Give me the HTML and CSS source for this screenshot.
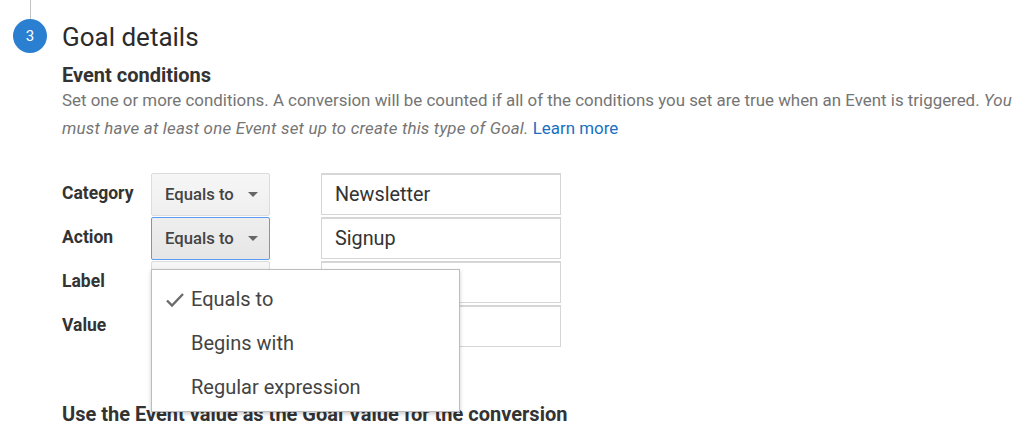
FILE: index.html
```html
<!DOCTYPE html>
<html lang="en">
<head>
    <meta charset="UTF-8">
    <meta name="viewport" content="width=device-width, initial-scale=1.0">
    <title>Goal details</title>
    <link rel="stylesheet" href="styles.css">
</head>
<body>
    <div class="step">
        <div class="rail">
            <div class="rail-line"></div>
            <div class="step-badge">3</div>
        </div>

        <div class="step-content">
            <h2 class="step-title">Goal details</h2>
            <h3 class="section-title">Event conditions</h3>
            <p class="section-desc">
                Set one or more conditions. A conversion will be counted if all of the conditions you set are true when an Event is triggered.
                <em>You must have at least one Event set up to create this type of Goal.</em>
                <a href="#" class="learn-more">Learn more</a>
            </p>

            <div class="conditions">
                <div class="cond-label">Category</div>
                <div class="cond-select">Equals to <span class="caret"></span></div>
                <div class="cond-input">Newsletter</div>

                <div class="cond-label">Action</div>
                <div class="cond-select focused">Equals to <span class="caret"></span></div>
                <div class="cond-input">Signup</div>

                <div class="cond-label">Label</div>
                <div class="cond-select"></div>
                <div class="cond-input"></div>

                <div class="cond-label">Value</div>
                <div class="cond-select"></div>
                <div class="cond-input"></div>

                <!-- open menu for the Action select -->
                <ul class="menu">
                    <li class="menu-item selected">
                        <svg class="check" width="20" height="16" viewBox="0 0 20 16">
                            <path d="M2 8.5 L7 13.5 L18 2" fill="none" stroke="#6b6b6b" stroke-width="2.4"/>
                        </svg>
                        Equals to
                    </li>
                    <li class="menu-item">Begins with</li>
                    <li class="menu-item">Regular expression</li>
                </ul>
            </div>

            <h3 class="section-title goal-value">Use the Event value as the Goal Value for the conversion</h3>
        </div>
    </div>
</body>
</html>
```

FILE: styles.css
```css
:root {
    --text-color: #333;
    --muted-color: #757575;
    --link-color: #1a6fbf;
    --badge-color: #2a7fd0;
    --border-color: #d6d6d6;
    --focus-color: #5a9bf6;
}

body {
    margin: 0;
    font-family: Roboto, "Noto Sans", sans-serif;
    color: var(--text-color);
    background: #fff;
    overflow: hidden;
}

.step {
    display: flex;
}

.rail {
    width: 60px;
    display: flex;
    flex-direction: column;
    align-items: center;
    flex-shrink: 0;
}

.rail-line {
    width: 1px;
    height: 19px;
    background-color: #c4c4c4;
}

.step-badge {
    width: 34px;
    height: 34px;
    border-radius: 50%;
    background-color: var(--badge-color);
    color: #fff;
    font-size: 15px;
    line-height: 34px;
    text-align: center;
}

.step-content {
    margin-left: 2px;
    padding-top: 18px;
    flex: 1;
}

.step-title {
    margin: 0;
    font-size: 26px;
    line-height: 38px;
    font-weight: 400;
    color: #2b2b2b;
}

.section-title {
    margin: 8px 0 0;
    font-size: 20px;
    line-height: 22px;
    font-weight: 700;
}

.section-desc {
    margin: 0;
    font-size: 16.9px;
    line-height: 28px;
    color: var(--muted-color);
}

.section-desc em {
    letter-spacing: 0.2px;
}

.learn-more {
    color: var(--link-color);
    text-decoration: none;
}

.conditions {
    position: relative;
    margin-top: 31px;
    display: grid;
    grid-template-columns: 89px 170px 240px;
    grid-auto-rows: 44px;
    width: max-content;
}

.cond-label {
    padding-top: 10px;
    font-size: 17.5px;
    line-height: 20px;
    font-weight: 700;
}

.cond-select {
    width: 119px;
    height: 43px;
    box-sizing: border-box;
    display: flex;
    align-items: center;
    gap: 14px;
    padding-left: 13px;
    border: 1px solid #dcdcdc;
    border-radius: 2px;
    background: linear-gradient(#f6f6f6, #efefef);
    font-size: 16.7px;
    font-weight: 500;
    color: #444;
    white-space: nowrap;
    overflow: hidden;
}

.cond-select.focused {
    border-color: var(--focus-color);
    background: linear-gradient(#eeeeee, #e6e6e6);
}

.caret {
    flex-shrink: 0;
    width: 0;
    height: 0;
    border-left: 5px solid transparent;
    border-right: 5px solid transparent;
    border-top: 5px solid #666;
}

.cond-input {
    height: 42px;
    box-sizing: border-box;
    padding-left: 13px;
    border: 1px solid var(--border-color);
    border-top-width: 2px;
    font-size: 19.8px;
    line-height: 39px;
    color: #333;
}

.menu {
    position: absolute;
    top: 96px;
    left: 89px;
    width: 309px;
    box-sizing: border-box;
    margin: 0;
    padding: 8px 0 1px;
    list-style: none;
    background: #fff;
    border: 1px solid #bdbdbd;
    box-shadow: 0 2px 4px rgba(0, 0, 0, 0.2);
}

.menu-item {
    position: relative;
    height: 44px;
    line-height: 43px;
    padding-left: 39px;
    font-size: 20px;
    color: #444;
}

.menu-item .check {
    position: absolute;
    left: 13px;
    top: 14px;
}

.goal-value {
    margin-top: 54px;
}
```
